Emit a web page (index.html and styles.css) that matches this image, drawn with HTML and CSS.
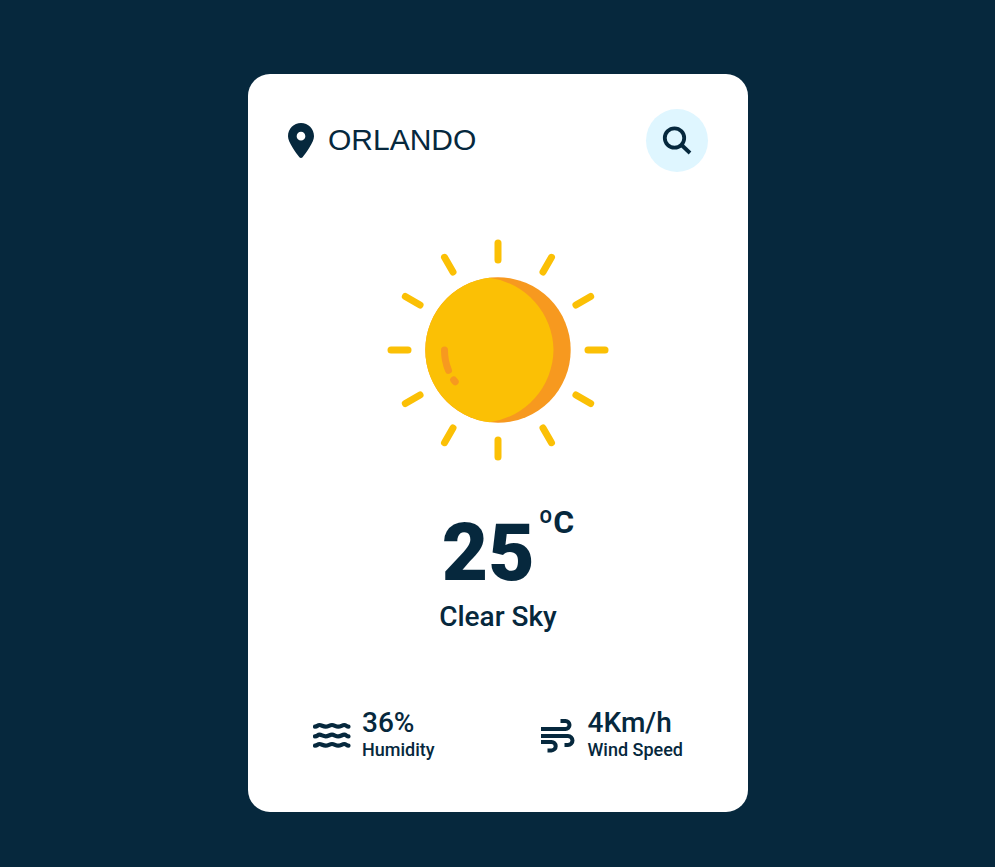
FILE: index.html
```html
<!DOCTYPE html>
<html lang="en">
<head>
<meta charset="utf-8">
<title>Weather</title>
<link rel="stylesheet" href="styles.css">
</head>
<body>
<main class="card">
  <header class="search">
    <svg class="pin" viewBox="0 0 384 512" preserveAspectRatio="none"><path d="M215.7 499.2C267 435 384 279.4 384 192C384 86 298 0 192 0S0 86 0 192c0 87.4 117 243 168.3 307.2c12.3 15.3 35.1 15.3 47.4 0zM192 128a64 64 0 1 1 0 128 64 64 0 1 1 0-128z"/></svg>
    <span class="city">ORLANDO</span>
    <button class="search-btn" aria-label="Search">
      <svg viewBox="0 0 30 30"><circle cx="12.500" cy="12" r="9.700"/><path d="M19 18.500L28 27"/></svg>
    </button>
  </header>
  <svg class="sun" viewBox="0 0 222 222">
    <g class="rays">
      <path id="ray" d="M111 4v17"/>
      <use href="#ray" transform="rotate(30 111 111)"/>
      <use href="#ray" transform="rotate(60 111 111)"/>
      <use href="#ray" transform="rotate(90 111 111)"/>
      <use href="#ray" transform="rotate(120 111 111)"/>
      <use href="#ray" transform="rotate(150 111 111)"/>
      <use href="#ray" transform="rotate(180 111 111)"/>
      <use href="#ray" transform="rotate(210 111 111)"/>
      <use href="#ray" transform="rotate(240 111 111)"/>
      <use href="#ray" transform="rotate(270 111 111)"/>
      <use href="#ray" transform="rotate(300 111 111)"/>
      <use href="#ray" transform="rotate(330 111 111)"/>
    </g>
    <circle class="shade" cx="111" cy="111" r="72.700"/>
    <path class="disc" d="M102.500 38.800A74 74 0 0 1 166.500 111A74 74 0 0 1 102.500 183.200A72.700 72.700 0 0 1 102.500 38.800z"/>
    <path class="glint" d="M57.500 111Q57.500 122 61.500 131.300M66.700 141l1.500 1.800"/>
  </svg>
  <p class="temperature">25<span class="unit">ºC</span></p>
  <p class="description">Clear Sky</p>
  <footer class="details">
    <div class="detail humidity">
      <svg class="waves" viewBox="0 0 38 28">
        <path id="wave" d="M2 5.700C4.500 5.700 4.500 4 6.500 4S10 5.700 12.700 5.700S16.500 4 19 4S22.500 5.700 25.200 5.700S29 4 31.200 4S33.500 5.700 35.500 5.700"/>
        <use href="#wave" y="9.700"/>
        <use href="#wave" y="19"/>
      </svg>
      <div><p class="value">36%</p><p class="label">Humidity</p></div>
    </div>
    <div class="detail wind">
      <svg class="gusts" viewBox="0 0 34 34"><path d="M0 10H24.500A4 4 0 0 0 24.500 2H19.500M0 17H27A4.500 4.500 0 0 1 27 26H23.500M0 23H10.500A4.200 4.200 0 0 1 10.500 31.400H6.500"/></svg>
      <div><p class="value">4Km/h</p><p class="label">Wind Speed</p></div>
    </div>
  </footer>
</main>
</body>
</html>
```
FILE: styles.css
```css
* { box-sizing: border-box; margin: 0; padding: 0; }
body {
  min-height: 867px;
  padding-top: 74px;
  background: #06283d;
  color: #06283d;
  font-family: Roboto, sans-serif;
  font-weight: 500;
}
.card {
  width: 500px;
  height: 738px;
  margin-left: 248px;
  padding: 35px 40px;
  border-radius: 22px;
  background: #fff;
  display: flex;
  flex-direction: column;
  align-items: center;
}
.search { width: 100%; height: 63px; display: flex; align-items: center; }
.pin { width: 26px; height: 35px; fill: #06283d; }
.city { flex: 1; padding: 0 0 2px 14px; font: 400 30px/34px "Liberation Sans", sans-serif; }
.search-btn {
  width: 62px;
  height: 63px;
  border: 0;
  border-radius: 50%;
  background: #dff6ff;
  display: flex;
  align-items: center;
  justify-content: center;
}
.search-btn svg { width: 30px; height: 30px; fill: none; stroke: #06283d; stroke-width: 3.800; }
.sun { width: 222px; height: 222px; margin-top: 67px; flex: none; }
.rays { fill: none; stroke: #fbc005; stroke-width: 7; stroke-linecap: round; }
.shade { fill: #f7991f; }
.disc { fill: #fbc005; }
.glint { fill: none; stroke: #f7991f; stroke-width: 7; stroke-linecap: round; }
.temperature {
  display: flex;
  align-items: flex-start;
  margin-top: 45px;
  padding-left: 20px;
  font-size: 80px;
  font-weight: 900;
  line-height: 94px;
}
.unit { margin: -3px 0 0 4px; font-size: 32px; font-weight: 700; line-height: 38px; }
.description { font-size: 28px; line-height: 34px; }
.details { width: 100%; display: flex; justify-content: space-between; margin-top: 72px; padding: 0 25px; }
.detail { display: flex; gap: 11px; }
.wind { gap: 12px; }
.waves { width: 38px; height: 28px; margin-top: 15px; fill: none; stroke: #06283d; stroke-width: 4.200; stroke-linecap: round; }
.gusts { width: 34px; height: 34px; margin-top: 13px; fill: none; stroke: #06283d; stroke-width: 4; }
.value { font-size: 28px; line-height: 33px; }
.label { font-size: 18px; line-height: 21px; }
```
